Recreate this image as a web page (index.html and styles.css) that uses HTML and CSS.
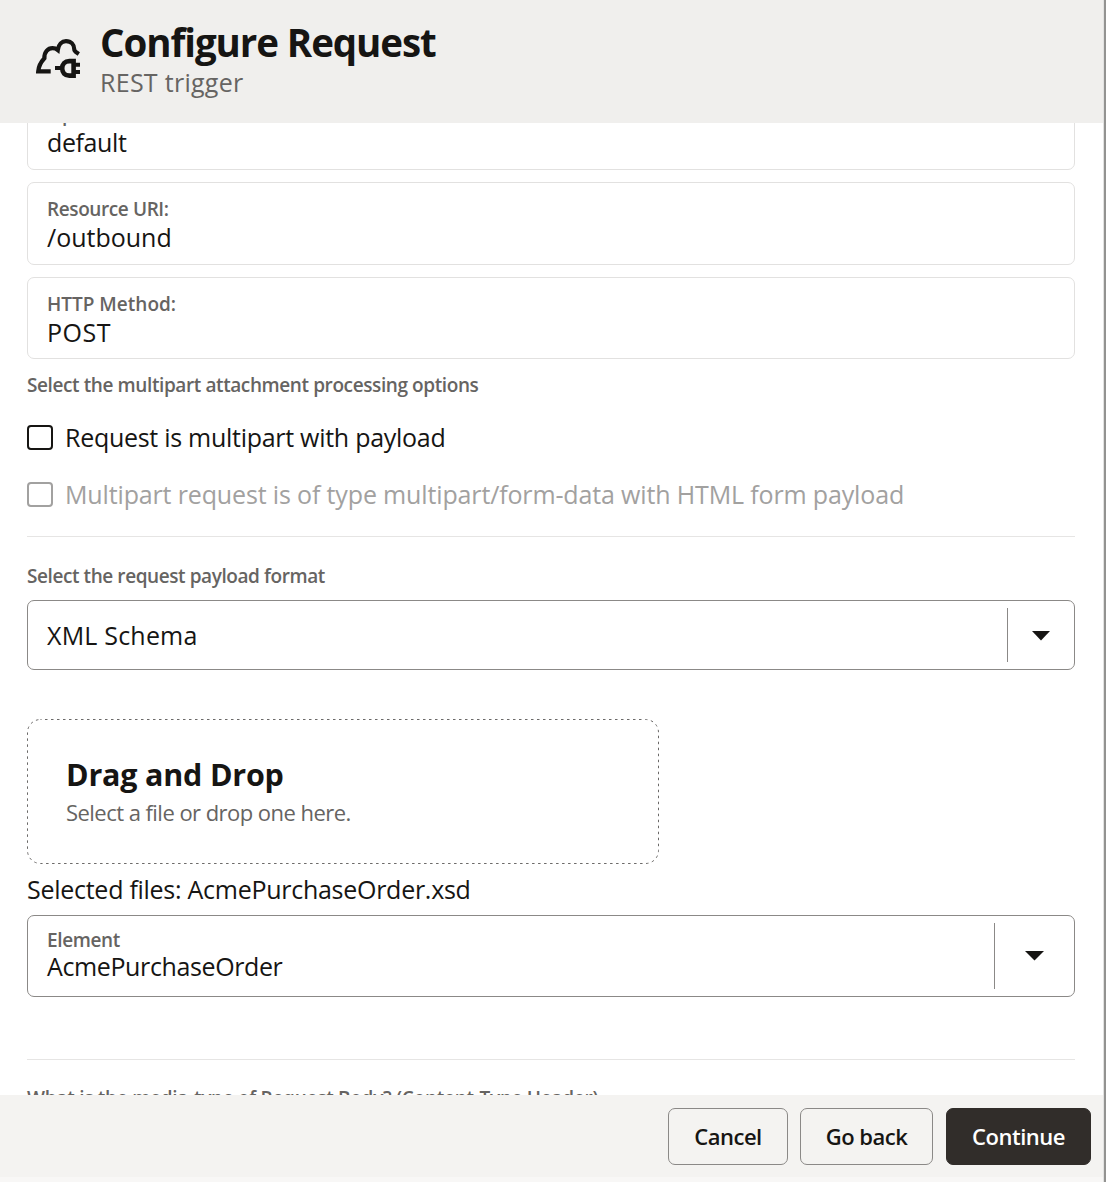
FILE: index.html
```html
<!DOCTYPE html>
<html lang="en">
<head>
<meta charset="utf-8">
<title>Configure Request</title>
<link rel="stylesheet" href="styles.css">
</head>
<body>
<div class="dialog">
  <header class="header">
    <svg class="header-icon" viewBox="0 0 46 42" width="46" height="42" fill="none" stroke="#161513" stroke-width="4.200">
      <path d="M15.700 34.400H3.200C3.600 29.500 5.500 25.500 9.400 21.300C9 15 13 11.200 17.500 11.200C19.500 11.200 21.300 11.800 22.800 13C23.500 7.500 27 4.100 31 4.100C36 4.100 39.300 7.500 39.300 12.500C39.300 14.500 41.500 15.500 43.800 17"/>
      <path d="M38.600 24.100H34.300C29.800 24.100 27.200 27 27.200 31.300S29.800 38.600 34.300 38.600H38.600Z" stroke-width="4.600"/>
      <path d="M20 31.100H26M40 27.800H45M40 35H45" stroke-width="4"/>
    </svg>
    <div class="header-text">
      <h1 class="title">Configure Request</h1>
      <p class="subtitle">REST trigger</p>
    </div>
  </header>
  <main class="content">
    <section class="card card-operation">
      <div class="label">Operation:</div>
      <div class="value">default</div>
    </section>
    <section class="card card-uri">
      <div class="label">Resource URI:</div>
      <div class="value">/outbound</div>
    </section>
    <section class="card card-method">
      <div class="label">HTTP Method:</div>
      <div class="value">POST</div>
    </section>
    <div class="label options-label">Select the multipart attachment processing options</div>
    <div class="check"><span class="box"></span><span class="value">Request is multipart with payload</span></div>
    <div class="check disabled"><span class="box"></span><span class="value">Multipart request is of type multipart/form-data with HTML form payload</span></div>
    <hr class="rule">
    <div class="label format-label">Select the request payload format</div>
    <div class="select select-format">
      <div class="select-text"><div class="value">XML Schema</div></div>
      <div class="select-toggle"><svg width="18" height="10" viewBox="0 0 18 10"><path d="M0 0H18L9 9.500Z" fill="#161513"/></svg></div>
    </div>
    <div class="dropzone">
      <svg class="outline" width="632" height="145"><rect x=".5" y=".5" width="631" height="144" rx="13" fill="none" stroke="#6b6968" stroke-dasharray="2.500 3.500" stroke-dashoffset="1.500"/></svg>
      <h2 class="drop-title">Drag and Drop</h2>
      <p class="drop-hint">Select a file or drop one here.</p>
    </div>
    <div class="value selected">Selected files: AcmePurchaseOrder.xsd</div>
    <div class="select select-element">
      <div class="select-text"><div class="label">Element</div><div class="value">AcmePurchaseOrder</div></div>
      <div class="select-toggle"><svg width="19" height="10" viewBox="0 0 19 10"><path d="M0 0H19L9.500 9.500Z" fill="#161513"/></svg></div>
    </div>
    <hr class="rule rule-last">
    <div class="label media-label">What is the media-type of Request Body? (Content-Type Header)</div>
  </main>
  <footer class="footer">
    <button class="btn cancel">Cancel</button>
    <button class="btn back">Go back</button>
    <button class="btn primary">Continue</button>
  </footer>
</div>
</body>
</html>
```
FILE: styles.css
```css
* { box-sizing: border-box; margin: 0; }
body { font-family: "Open Sans", "Noto Sans", sans-serif; color: #161513; background: #fff; overflow: hidden; }

.dialog { width: 1106px; height: 1182px; display: flex; flex-direction: column; padding-right: 1px; background: #e2e2e1; border-right: 2px solid #939391; overflow: hidden; }

/* Header */
.header { flex: none; height: 123px; background: #f0efed; display: flex; padding: 19px 0 0 35px; gap: 19px; }
.header-icon { margin-top: 18px; flex: none; }
.title { font-size: 38.5px; line-height: 47px; font-weight: 700; letter-spacing: -1.08px; white-space: nowrap; }
.subtitle { font-size: 25px; line-height: 34px; margin-top: -1px; letter-spacing: .28px; color: #666462; white-space: nowrap; }

/* Form */
.content { flex: none; height: 972px; padding: 0 28px 0 27px; background: #fff; overflow: hidden; display: flex; flex-direction: column; }
.content > * { flex: none; }
.label { font-size: 19px; line-height: 26px; font-weight: 600; color: #666462; white-space: nowrap; }
.value { font-size: 25px; line-height: 32px; white-space: nowrap; }

.card { border: 1px solid #e2e1e0; border-radius: 7px; padding: 13px 19px 0; margin-bottom: 12px; }
.card .value { margin-top: -1px; }
.card-operation { height: 83px; margin-top: -36px; }
.card-operation .value { letter-spacing: -.4px; }
.card-uri { height: 83px; }
.card-uri .label { letter-spacing: -.4px; }
.card-uri .value { letter-spacing: 0; }
.card-method { height: 82px; }
.card-method .label { letter-spacing: 0; }
.card-method .value { letter-spacing: .5px; }

.options-label { margin-top: 1px; letter-spacing: -.4px; }
.check { display: flex; align-items: flex-start; gap: 12px; height: 32px; margin-top: 23px; }
.check .value { letter-spacing: -.28px; }
.check .box { width: 26px; height: 25px; margin-top: 4px; border: 2px solid #161513; border-radius: 4px; }
.check.disabled { margin-top: 25px; color: #a2a1a0; }
.check.disabled .value { letter-spacing: -.145px; }
.check.disabled .box { border-color: #a2a1a0; }
.rule { border: 0; height: 1px; background: #e6e5e4; margin-top: 26px; }

/* Select fields */
.format-label { margin-top: 26px; letter-spacing: -.42px; }
.select { display: flex; border: 1px solid #8b8987; border-radius: 7px; }
.select-text { flex: 1; padding-left: 19px; }
.select-toggle { display: flex; align-items: center; justify-content: center; border-left: 1px solid #8b8987; margin: 7px 0; }
.select-format { height: 70px; margin-top: 11px; }
.select-format .select-toggle { width: 67px; padding-top: 2px; }
.select-format .value { margin-top: 18px; letter-spacing: .2px; }
.select-element { height: 82px; margin-top: 10px; }
.select-element .select-toggle { width: 80px; }
.select-element .label { margin-top: 11px; line-height: 24px; padding-top: 1px; letter-spacing: -.36px; }
.select-element .value { margin-top: -2px; letter-spacing: -.38px; }

/* File drop */
.dropzone { position: relative; width: 632px; height: 145px; margin-top: 49px; padding: 35px 39px 0; }
.outline { position: absolute; inset: 0; }
.drop-title { font-size: 30.5px; line-height: 40px; letter-spacing: -.2px; white-space: nowrap; }
.drop-hint { font-size: 22px; line-height: 30px; letter-spacing: -.54px; color: #666462; margin-top: 3px; white-space: nowrap; }
.selected { margin-top: 9px; letter-spacing: -.27px; }

.rule-last { margin-top: 62px; }
.media-label { margin-top: 25px; letter-spacing: -.27px; }

/* Footer */
.footer { flex: none; height: 87px; display: flex; justify-content: flex-end; gap: 12px; padding: 13px 12px 0 0; background: #f4f3f1; border-bottom: 5px solid #f8f7f6; }
.btn { height: 57px; padding: 0 0 2px; font: 600 22px/30px "Open Sans", "Noto Sans", sans-serif; letter-spacing: -.5px; color: #161513; background: transparent; border: 1px solid #8b8987; border-radius: 7px; white-space: nowrap; }
.cancel { width: 120px; }
.back { width: 133px; }
.primary { width: 145px; margin-left: 1px; background: #312d2a; border-color: #312d2a; color: #fff; }
```
